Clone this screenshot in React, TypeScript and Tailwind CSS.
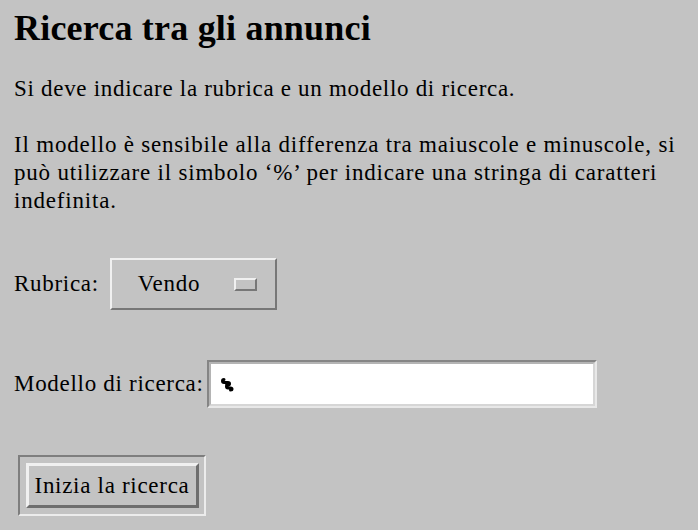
import React from 'react';

const Cursor: React.FC = () => (
  <svg width="14" height="15" viewBox="0 0 14 15" className="block">
    <path d="M3 2.5 C1 2.5 1 5.5 3 5.5 L7 5.5 C9 5.5 9 8 7 8 L5.5 8 M7 8 C5 8 5 11 7 11 L9.5 11 C11.5 11 11.5 13 9.5 13" fill="none" stroke="#000" strokeWidth="3" strokeLinecap="round" />
  </svg>
);

const App: React.FC = () => {
  return (
    <div className="min-h-screen bg-[#c3c3c3] pl-[14px] pt-[10px] text-black font-['Liberation_Serif','Times_New_Roman',serif]">
      <h1 className="text-[36px] font-bold leading-none tracking-[0.2px]">Ricerca tra gli annunci</h1>

      <div className="text-[23px] leading-[28px] tracking-[0.7px]">
        <p className="mt-[29px] whitespace-nowrap">
          Si deve indicare la rubrica e un modello di ricerca.
        </p>

        <p className="mt-[28px] whitespace-nowrap tracking-[0.8px]">
          Il modello è sensibile alla differenza tra maiuscole e minuscole, si
          <br />
          può utilizzare il simbolo ‘%’ per indicare una stringa di caratteri
          <br />
          indefinita.
        </p>

        <div className="mt-[43px] flex items-center">
          <span>Rubrica:</span>
          <div className="ml-[11px] flex h-[52px] w-[167px] items-center border-2 border-t-[#f0f0f0] border-l-[#f0f0f0] border-b-[#777777] border-r-[#777777] bg-[#c3c3c3] pl-[26px] pr-[18px]">
            <span className="flex-1">Vendo</span>
            <span className="h-[13px] w-[23px] border-2 border-t-[#f0f0f0] border-l-[#f0f0f0] border-b-[#777777] border-r-[#777777]" />
          </div>
        </div>

        <div className="mt-[50px] flex items-center">
          <span>Modello di ricerca:</span>
          <div className="ml-[3px] h-[48px] w-[390px] border-2 border-t-[#858585] border-l-[#858585] border-b-[#e8e8e8] border-r-[#e8e8e8]">
            <div className="flex h-full w-full items-center border-2 border-t-[#b4b4b4] border-l-[#b4b4b4] border-b-[#d6d6d6] border-r-[#d6d6d6] bg-white pl-[10px]">
              <Cursor />
            </div>
          </div>
        </div>

        <div className="ml-[4px] mt-[47px] inline-flex h-[61px] w-[188px] items-center justify-center border-2 border-t-[#7e7e7e] border-l-[#7e7e7e] border-b-[#ececec] border-r-[#ececec]">
          <button className="flex h-[45px] w-[173px] items-center justify-center border-[3px] border-t-[#f0f0f0] border-l-[#f0f0f0] border-b-[#6e6e6e] border-r-[#6e6e6e] bg-[#c3c3c3] tracking-[0.7px]">
            Inizia la ricerca
          </button>
        </div>
      </div>
    </div>
  );
};

export default App;
